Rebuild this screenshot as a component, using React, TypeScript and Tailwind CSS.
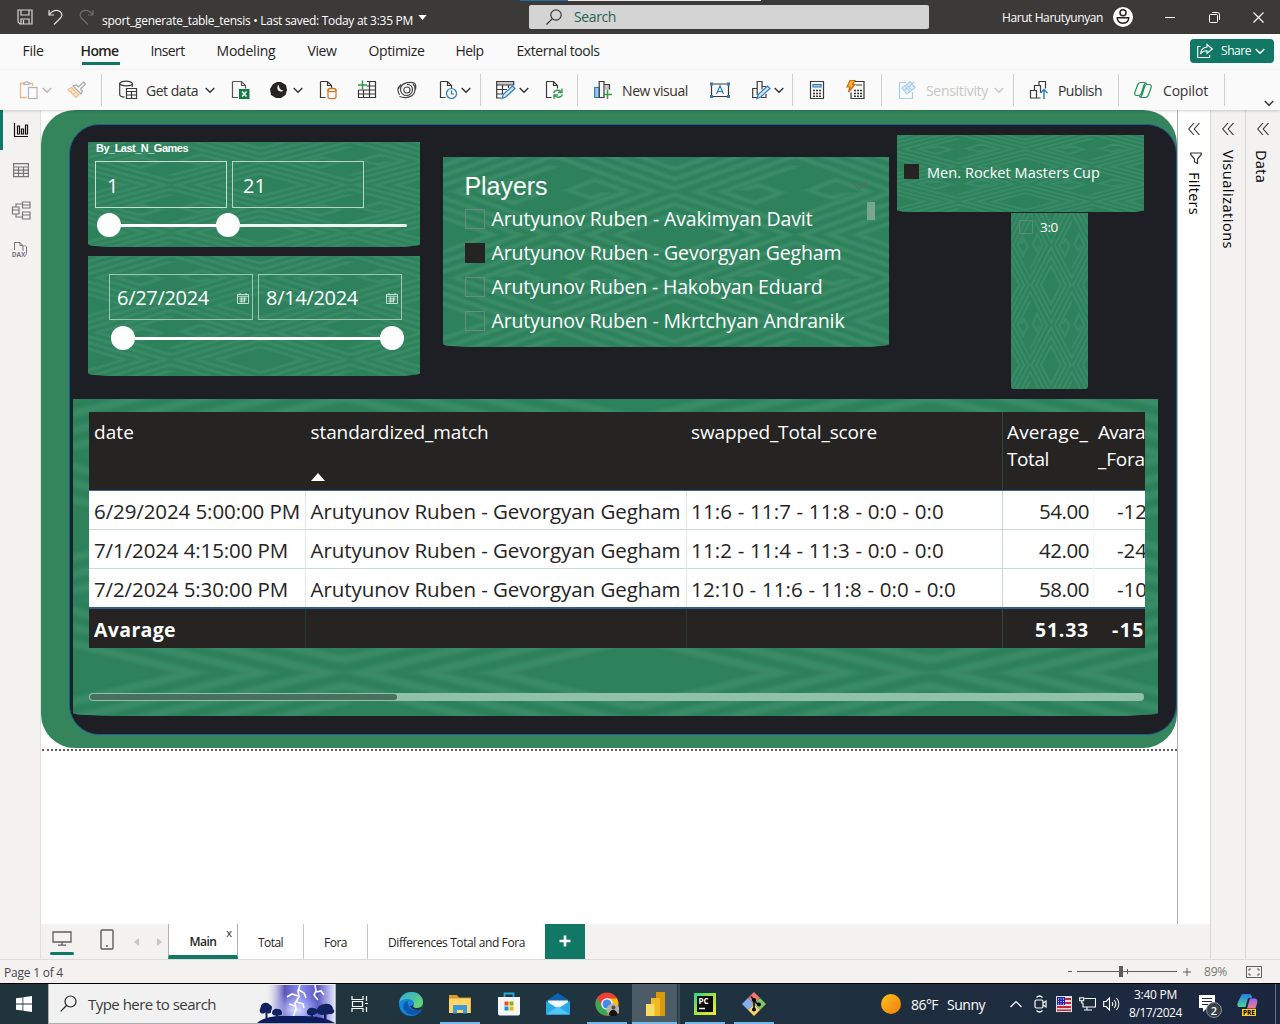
import React, { useId, useLayoutEffect, useRef } from "react";

/* Text run spread over a known width by adjusting its tracking. */
function Fit({ w, children, className = "", vertical = false }: { w: number; children: string; className?: string; vertical?: boolean }) {
  const ref = useRef<HTMLSpanElement>(null);
  useLayoutEffect(() => {
    const el = ref.current;
    if (!el) return;
    el.style.letterSpacing = "0px";
    const box = el.getBoundingClientRect();
    const natural = vertical ? box.height : box.width;
    el.style.letterSpacing = (w - natural) / children.length + "px";
  }, [w, children, vertical]);
  return (
    <span ref={ref} className={"inline-block shrink-0 whitespace-pre " + className}>
      {children}
    </span>
  );
}

type IconProps = { className?: string; children: React.ReactNode; box?: string };
function Ico({ className = "size-5", children, box = "0 0 20 20" }: IconProps) {
  return (
    <svg viewBox={box} fill="none" stroke="#3b3a39" strokeWidth="1.2" className={"shrink-0 " + className}>
      {children}
    </svg>
  );
}

function Chev({ className = "" }: { className?: string }) {
  return (
    <svg viewBox="0 0 10 10" fill="none" stroke="currentColor" strokeWidth="1.4" className={"size-2.5 shrink-0 " + className}>
      <path d="M.7 3 5 7.3 9.3 3" />
    </svg>
  );
}

function Sep({ className }: { className: string }) {
  return <div className={"h-8 w-px shrink-0 bg-[#d2d0ce] " + className} />;
}

function TitleBar() {
  return (
    <header className="relative flex h-[34px] items-center bg-[#3b3a39] text-white">
      <div className="absolute left-[520px] top-0 flex h-px w-[241px] bg-[#e8e8e8]">
        <div className="h-px w-12 bg-[#1d6fa5]" />
      </div>
      <Ico className="ml-[17px] size-4 text-white" box="0 0 16 16">
        <path d="M1 1h14v14H3l-2-2zM4 1v5h8V1M4 15v-5h8v5M6.5 11v4" stroke="#d6d6d6" />
      </Ico>
      <Ico className="ml-[15px] size-4" box="0 0 16 16">
        <path d="M1 1v5h5M1.3 5.7C4 2 7 1 10 1.6c4 1 5 5 2.5 7.400L6 15.500" stroke="#e0e0e0" />
      </Ico>
      <Ico className="ml-[14px] size-4" box="0 0 16 16">
        <path d="M15 1v5h-5M14.700 5.700C12 2 9 1 6 1.600c-4 1-5 5-2.500 7.400L10 15.500" stroke="#6f6e6d" />
      </Ico>
      <Fit w={311} className="ml-[8px] mt-[8px] text-[12px] leading-4">sport_generate_table_tensis • Last saved: Today at 3:35 PM</Fit>
      <svg viewBox="0 0 10 6" className="ml-[5px] h-[5px] w-[9px]"><path d="M0 0h10L5 6z" fill="#fff" /></svg>
      <div className="absolute left-[529px] top-[5px] flex h-6 w-[400px] items-center rounded-[2px] bg-[#d4d4d4]">
        <Ico className="ml-[17px] size-4" box="0 0 16 16">
          <circle cx="10" cy="6" r="5.200" /><path d="M6.300 9.700.5 15.500" />
        </Ico>
        <Fit w={42} className="ml-[12px] text-[14px] leading-5 text-[#2b5e50]">Search</Fit>
      </div>
      <div className="ml-auto flex items-center">
        <Fit w={101} className="mt-px text-[12px]">Harut Harutyunyan</Fit>
        <svg viewBox="0 0 20 20" className="ml-[10px] size-5">
          <circle cx="10" cy="10" r="10" fill="#fff" />
          <circle cx="10" cy="5.700" r="3" fill="none" stroke="#222" strokeWidth="1.500" />
          <path d="M4.300 10.800h11.400c0 3.500-2.500 5.400-5.700 5.400s-5.700-1.900-5.700-5.400z" fill="none" stroke="#222" strokeWidth="1.500" />
        </svg>
        <div className="ml-[32px] h-px w-[10px] bg-white" />
        <svg viewBox="0 0 11 11" className="ml-[34px] size-[11px]" fill="none" stroke="#fff">
          <rect x=".5" y="2.500" width="8" height="8" rx="1" /><path d="M3 .5h5.500a2 2 0 0 1 2 2V8" />
        </svg>
        <svg viewBox="0 0 11 11" className="ml-[33px] mr-[16px] size-[11px]" fill="none" stroke="#fff" strokeWidth="1.200"><path d="m.5.5 10 10m0-10-10 10" /></svg>
      </div>
    </header>
  );
}

function Menu() {
  const t = "text-[14px] leading-5";
  return (
    <nav className="flex h-9 items-center bg-[#fafafa] pb-[3px] text-[#252423]">
      <Fit w={21} className={"ml-[22.500px] " + t}>File</Fit>
      <div className="relative ml-[37px] flex">
        <Fit w={38} className={"font-semibold " + t}>Home</Fit>
        <div className="absolute -bottom-[4px] left-[1px] h-[3px] w-[38px] bg-[#117865]" />
      </div>
      <Fit w={34} className={"ml-[32px] " + t}>Insert</Fit>
      <Fit w={59} className={"ml-[32px] " + t}>Modeling</Fit>
      <Fit w={29} className={"ml-[32px] " + t}>View</Fit>
      <Fit w={56} className={"ml-[32px] " + t}>Optimize</Fit>
      <Fit w={28} className={"ml-[31px] " + t}>Help</Fit>
      <Fit w={83} className={"ml-[33px] " + t}>External tools</Fit>
      <button className="ml-auto mr-[6px] flex h-6 w-[84px] items-center rounded-[4px] bg-[#117865] text-white">
        <svg viewBox="0 0 16 16" className="ml-[7px] size-4" fill="none" stroke="#fff" strokeWidth="1.100">
          <path d="M3.500 3.500H.7v11h12V12" /><path d="M10 1.500 15.300 6 10 10.300V7.800C6.500 7.800 4.800 9 3.500 11c.3-4 2.800-6.500 6.500-7z" />
        </svg>
        <Fit w={30} className="ml-[8px] text-[12px]">Share</Fit>
        <Chev className="ml-[4px]" />
      </button>
    </nav>
  );
}

const doc = "M3.500 1.500h7l4 4v3M10.500 1.500v4h4M3.500 1.500v16h5";

function Toolbar() {
  const t = "text-[14px] leading-5 mt-px";
  return (
    <div className="relative z-10 flex h-10 items-center bg-[#fafafa] text-[#333] shadow-[0_1px_3px_rgba(0,0,0,0.18)]">
      <Ico className="ml-[19px] size-5">
        <path d="M8 17.500H1.500v-14h4M9.500 3.500h4V6" stroke="#efb984" strokeWidth="1.400" /><path d="M5 4.500v-2h1.500q1-2 2 0H10v2z" stroke="#b5b3b1" /><rect x="9.500" y="7.500" width="8.500" height="11" stroke="#b5b3b1" />
      </Ico>
      <Chev className="ml-[3px] text-[#b8b6b4]" />
      <Ico className="ml-[15px] size-5">
        <path d="m1 9.500 8 8 3-2.500-7.500-7.500zM3.500 11.500l2-1M6 14l2-1" fill="#fce5cc" stroke="#edbf8f" />
        <path d="m6 6 8 8 1.500-3-2-2 5-5-2-2-5 5-2-2z" stroke="#aaa8a6" />
      </Ico>
      <Sep className="ml-[14px]" />
      <Ico className="ml-[16px] size-5">
        <ellipse cx="8" cy="3.500" rx="6.300" ry="2.300" /><path d="M1.700 3.500v11c0 1.600 2.500 2.500 5 2.500M14.300 3.500V7M8.500 8.500h10v10h-10zM8.500 11.500h10M8.500 15h10M13.500 11.500v7" />
      </Ico>
      <Fit w={52} className={"ml-[8px] " + t}>Get data</Fit>
      <Chev className="ml-[7px]" />
      <Ico className="ml-[16px] size-5">
        <path d="M1.500 1.500h9l4 4v3M10.500 1.500v4h4M1.500 1.500v16H7" stroke="#555" /><path d="M8 9h10.500v10H8z" fill="#107c41" stroke="none" /><path d="m11 11.500 4.500 5m0-5-4.500 5" stroke="#fff" strokeWidth="1.500" />
      </Ico>
      <Ico className="ml-[18px] size-5">
        <path d="M8 2h4l5 3 1 5-1.500 5-4.500 3H7L2 15 1 9l3-5z" fill="#252423" stroke="none" /><path d="M9.500 4.500C7.500 7 8 11.500 12 11.500c1.200 0 2-.5 2.500-1-2.500.3-4.500-2-5-6z" fill="#fafafa" stroke="none" />
      </Ico>
      <Chev className="ml-[4px]" />
      <Ico className="ml-[15px] size-5">
        <path d={doc} transform="translate(-1)" /><g stroke="#d9731a"><ellipse cx="14" cy="10" rx="4" ry="1.700" fill="#fafafa" /><path d="M10 10v7c0 1 1.500 1.700 4 1.700s4-.7 4-1.700v-7" fill="#fafafa" /><ellipse cx="14" cy="10" rx="4" ry="1.700" /></g>
      </Ico>
      <Ico className="ml-[19px] size-5">
        <path d="M10 1.500h8.500v16h-17V10M10 6h8.500M1.500 10h17M1.500 14h17M6.500 10v7.500M12.500 1.500v16" /><path d="M5.500.500v9M1 5h9" stroke="#2c9a48" strokeWidth="1.500" />
      </Ico>
      <Ico className="ml-[20px] size-5">
        <path d="M18 3.500C14 1.500 3.500 2 3.500 9.500c0 3.500 3 6 6 6s6-2.500 6-6-2.500-5-5.500-5M1.500 7c-1.500 3.500.5 7 1 8M2.500 16.500C8 18.500 18 18 18 9c0-2-.5-3.500-2-5M10 7c2 0 3 1.200 3 3s-1.500 3-3 3-3.200-1-3.200-3S8.500 7 10 7zM18 3.500c1 2 .8 5-.2 7M4 4.500C2.500 6 1.500 7 1.500 9" stroke="#444" />
      </Ico>
      <Ico className="ml-[21px] size-5">
        <path d={doc} transform="translate(-1)" /><circle cx="13.500" cy="13.500" r="5" stroke="#2b7bb9" fill="#fafafa" /><path d="M13.500 10.500v3.500H16" stroke="#2b7bb9" />
      </Ico>
      <Chev className="ml-[3px]" />
      <Sep className="ml-[9px]" />
      <Ico className="ml-[15px] size-5">
        <path d="M.7 1.500h17V5H.7z" fill="#c8c6c4" /><path d="M.7 5v13H5M.7 9.500H11M.7 14H7M6.500 5v9M12.500 5v3" /><path d="m6 18.500 1.200-4L16.500 6 19 8.500 9.700 17z" fill="#cfe6f8" stroke="#2b7bb9" />
      </Ico>
      <Chev className="ml-[3px]" />
      <Ico className="ml-[15px] size-5">
        <path d={doc} transform="translate(-1)" /><path d="M9.500 13c1-3 5.500-4 8-1M18 8.500V12.500h-4M18.500 14.500c-1 3-5.500 4-8 1M10 19v-4h4" stroke="#3a9a4c" strokeWidth="1.400" />
      </Ico>
      <Sep className="ml-[13px]" />
      <Ico className="ml-[15px] size-5">
        <path d="M1.700 7.500h4.500v10H1.700z" fill="#9ccbf0" stroke="#2b7bb9" /><path d="M12 5h4v5h-4z" fill="#c8c6c4" stroke="none" /><path d="M6.200 17.500v-16H11v16zM11 4.500h5.500v5" /><path d="M14.500 10v9M10 14.500h9" stroke="#3a9a4c" strokeWidth="1.500" />
      </Ico>
      <Fit w={66} className={"ml-[9px] " + t}>New visual</Fit>
      <Ico className="ml-[22px] size-5">
        <path d="M1.500 4h17v12.500h-17z" /><path d="M0 2.500h3v3H0zM17 2.500h3v3h-3zM0 15h3v3H0zM17 15h3v3h-3z" fill="#2b7bb9" stroke="none" /><path d="M6.500 14 10 5.800 13.500 14M7.700 11.500h4.600" stroke="#2b7bb9" />
      </Ico>
      <Ico className="ml-[21px] size-5">
        <path d="M6.500 17.500H1.700V8.500h4.500M6.200 15v-13.500H11v8M11 6.500h4M15 14v3.500h-5" /><path d="m6 18.500 1.200-4L16.500 6 19 8.500 9.700 17z" fill="#cfe6f8" stroke="#2b7bb9" />
      </Ico>
      <Chev className="ml-[3px]" />
      <Sep className="ml-[8px]" />
      <Ico className="ml-[14px] size-5">
        <path d="M3.500 1.500h13v17h-13z" /><path d="M6 4.500h8v2.500H6z" fill="#9ccbf0" stroke="#2b7bb9" /><path d="M6 10.500h2m1 0h2m1 0h2M6 13.500h2m1 0h2m1 0h2M6 16.200h2m1 0h2m1 0h2" strokeWidth="1.600" />
      </Ico>
      <Ico className="ml-[19px] size-5">
        <path d="M8 1.500h10v17H5v-6M10 5h6" /><path d="M8 10.500h2m1 0h2m1 0h2M8 13.500h2m1 0h2m1 0h2M8 16.200h2m1 0h2m1 0h2" strokeWidth="1.600" /><path d="M4 .5h5L6.500 4.500H9L2.500 12l1.500-5H1z" fill="#fbb040" stroke="#c96a10" />
      </Ico>
      <Sep className="ml-[15px]" />
      <Ico className="ml-[15px] size-5">
        <g stroke="#a9cfe8"><path d="M9 2.500H2.500v16h13V12" /><path d="m5 8 5 6 3-2.500-5-6zM9.500 4.500l5 6 3.500-3-5-6zM12 7l5-5M7.500 10 10 8" fill="#e0eff8" /></g>
      </Ico>
      <Fit w={62} className={"ml-[9px] text-[#c8c6c4] " + t}>Sensitivity</Fit>
      <Chev className="ml-[6px] text-[#c8c6c4]" />
      <Sep className="ml-[9px]" />
      <Ico className="ml-[15px] size-5">
        <path d="M1.500 10.500h6v7.500h-6zM5.500 10.500v-5h6v7M10 5.500v-4h6.500v7M7.500 18h4" /><path d="M15 19v-9M11.500 13 15 9.500l3.500 3.500" stroke="#2b7bb9" strokeWidth="1.400" />
      </Ico>
      <Fit w={44} className={"ml-[9px] " + t}>Publish</Fit>
      <Sep className="ml-[16px]" />
      <Ico className="ml-[14px] size-5">
        <g stroke="#1f9254" strokeWidth="1.200"><path d="M7.500 2.500h4c1.300 0 1.800.8 2.200 2.200M7.500 2.500C5.500 2.500 4.800 4 4.300 5.800L2 12c-.8 2.200-.2 3.500 2 3.500h2M6 15.500c1.500 0 2-.8 2.500-2.500L11 5c.5-1.500 1.200-2 2.500-2M12.500 17.500h-4c-1.300 0-1.800-.8-2.200-2.200M12.500 17.500c2 0 2.700-1.500 3.200-3.300L18 8c.8-2.200.2-3.500-2-3.500h-2M14 4.500c-1.500 0-2 .8-2.500 2.500L9 15c-.5 1.500-1 2.500-2.500 2.500" /></g>
      </Ico>
      <Fit w={45} className={"ml-[10px] " + t}>Copilot</Fit>
      <Sep className="ml-[16px]" />
      <Chev className="ml-auto mr-[6px] mt-[26px]" />
    </div>
  );
}

function Rail() {
  return (
    <aside className="flex w-[41px] shrink-0 flex-col items-center border-r border-[#e1dfdd] bg-[#f3f2f1]">
      <div className="flex h-10 w-full items-center border-l-[3px] border-[#117865]">
        <Ico className="ml-[10px] size-4" box="0 0 16 16"><path d="M1.500 1v13.500H15M4.500 12V4h2v8zM8.500 12V7h2v5zM12.500 12V3h2v9z" stroke="#111" /></Ico>
      </div>
      <Ico className="ml-[2px] mt-[12px] size-4" box="0 0 16 16"><path d="M.6 1.600h14.800v13H.6zM.6 5h14.800M.6 8.200h14.800M.6 11.400h14.800M5.500 5v9.600M10.500 5v9.600" stroke="#77757a" /></Ico>
      <Ico className="ml-[2px] mt-[22px] size-5"><path d="M1.500 7h6.500v7H1.500zM1.500 10H8M11.500 2h7.500v6h-7.500zM11.500 5H19M11.500 12h7.500v7h-7.500zM11.500 15H19M5 7V4h6.500M5 14v3h6.500" stroke="#77757a" /></Ico>
      <div className="mt-[20px] flex h-5 flex-col items-center">
        <svg viewBox="0 0 20 20" className="size-5" fill="none" stroke="#77757a"><path d="M4.500 10V2.500h5.500l3 3V11M10 2.500v3h3M14.500 5l2 2v6.500l-1 2" /></svg>
        <span className="-mt-[9px] mr-[3px] text-[6.500px] font-bold leading-[8px] text-[#77757a]">DAX</span>
      </div>
    </aside>
  );
}

/* Woven lozenge texture stretched over a panel. */
function Weave() {
  const id = useId();
  const scroll = (x: number, y: number) => (
    <g key={`${x}-${y}`}>
      <path d={`M${x - 17} ${y} ${x} ${y - 33} ${x + 17} ${y} ${x} ${y + 33}z`} />
      <path d={`M${x} ${y - 24} ${x - 12.5} ${y} ${x - 7} ${y + 11} ${x - 2.5} ${y + 1}l-4-7-2.500 5`} />
      <path d={`M${x} ${y + 24} ${x + 12.5} ${y} ${x + 7} ${y - 11} ${x + 2.5} ${y - 1}l4 7 2.500-5`} />
    </g>
  );
  return (
    <svg viewBox="0 0 77 176" preserveAspectRatio="none" className="absolute inset-0 size-full">
      <defs>
        <pattern id={id} width="41.600" height="80" x="19.200" y="32" patternUnits="userSpaceOnUse">
          <g fill="none" stroke="#3a8c67" strokeWidth="1.900">
            {[19.5, 14.800, 10].map((r) => (
              <path key={r} d={`M${20.8 - r} 40 20.800 ${40 - r * 1.92} ${20.8 + r} 40 20.800 ${40 + r * 1.92}z`} />
            ))}
            {[[0, 0], [41.6, 0], [0, 80], [41.6, 80]].map(([x, y]) => scroll(x, y))}
          </g>
        </pattern>
        <filter id={id + "s"} x="0" y="0" width="1" height="1"><feGaussianBlur stdDeviation=".45" /></filter>
      </defs>
      <rect width="77" height="176" fill="#2d815b" />
      <rect x="-5" y="-5" width="87" height="186" fill={`url(#${id})`} filter={`url(#${id}s)`} />
    </svg>
  );
}

function Panel({ className, children }: { className: string; children: React.ReactNode }) {
  return (
    <section className={"relative isolate shrink-0 overflow-hidden text-white " + className}>
      <div className="absolute inset-0 -z-10"><Weave /></div>
      {children}
    </section>
  );
}

function Cal() {
  return (
    <svg viewBox="0 0 12 11" className="h-[11px] w-3 shrink-0" fill="none" stroke="#d5e8df" strokeWidth=".9"><path d="M.5 1.500h11v9H.5zM.5 3.300h11M2.500 5.200h7M2.500 7h7M2.500 8.700h5M4.500 4.500v5M7.500 4.500v5M3 0v2M9 0v2" /></svg>
  );
}

function Knob() {
  return <div className="z-10 size-6 shrink-0 rounded-full bg-white" />;
}

const players = [
  { name: "Arutyunov Ruben - Avakimyan Davit", w: 321, on: false },
  { name: "Arutyunov Ruben - Gevorgyan Gegham", w: 350, on: true },
  { name: "Arutyunov Ruben - Hakobyan Eduard", w: 331, on: false },
  { name: "Arutyunov Ruben - Mkrtchyan Andranik", w: 353, on: false },
];

const rows = [
  { d: "6/29/2024 5:00:00 PM", dw: 206, s: "11:6 - 11:7 - 11:8 - 0:0 - 0:0", sw: 253, a: "54.00", f: "-12" },
  { d: "7/1/2024 4:15:00 PM", dw: 194, s: "11:2 - 11:4 - 11:3 - 0:0 - 0:0", sw: 253, a: "42.00", f: "-24" },
  { d: "7/2/2024 5:30:00 PM", dw: 194, s: "12:10 - 11:6 - 11:8 - 0:0 - 0:0", sw: 265, a: "58.00", f: "-10" },
];

function DataTable() {
  const h = "text-[19px] leading-[27px]";
  const cols = "grid grid-cols-[217px_381px_316px_91px_60px] w-[1065px]";
  return (
    <div className="mx-4 mt-[13px] w-[1056px] overflow-hidden">
      <div className={cols + " h-[79px] border-b border-[#3a6a94] bg-[#252423] pt-[7px]"}>
        <div className="pl-[5px]"><Fit w={40} className={h}>date</Fit></div>
        <div className="pl-[4.500px]">
          <Fit w={178} className={h}>standardized_match</Fit>
          <svg viewBox="0 0 14 8" className="mt-[27px] h-2 w-[14px]"><path d="M0 8h14L7 0z" fill="#fff" /></svg>
        </div>
        <div className="pl-[4px]"><Fit w={186} className={h}>swapped_Total_score</Fit></div>
        <div className="-ml-px -mt-[7px] flex flex-col items-start border-l border-[#31463c] pl-[4px] pt-[7px]"><Fit w={81} className={h}>Average_</Fit><Fit w={42} className={h}>Total</Fit></div>
        <div className="flex flex-col items-start pl-[4px]"><Fit w={47} className={h}>Avara</Fit><Fit w={47} className={h}>_Fora</Fit></div>
      </div>
      {rows.map((r) => (
        <div key={r.d} className={cols + " h-[39px] border-b border-[#cadad5] bg-white text-[20.500px] leading-[41px] text-[#252423]"}>
          <div className="border-r border-[#dfe9e6] pl-[5px]"><Fit w={r.dw}>{r.d}</Fit></div>
          <div className="border-r border-[#dfe9e6] pl-[4.500px]"><Fit w={370}>Arutyunov Ruben - Gevorgyan Gegham</Fit></div>
          <div className="border-r border-[#c4d8d1] pl-[4px]"><Fit w={r.sw}>{r.s}</Fit></div>
          <div className="border-r border-[#f3f6f5] pr-[4px] text-right"><Fit w={50}>{r.a}</Fit></div>
          <div className="pl-[23px]"><Fit w={30}>{r.f}</Fit></div>
        </div>
      ))}
      <div className={cols + " relative -mt-px h-[41px] border-t-2 border-[#2e5f8a] bg-[#252423] text-[19.500px] font-bold leading-[41px]"}>
        <div className="border-r border-[#293631] pl-[5px]"><Fit w={82}>Avarage</Fit></div>
        <div className="border-r border-[#293631]" />
        <div className="border-r border-[#31463c]" />
        <div className="pr-[5px] text-right"><Fit w={54}>51.33</Fit></div>
        <div className="pl-[18px]"><Fit w={33}>-15</Fit></div>
      </div>
    </div>
  );
}

function Report() {
  return (
    <div className="h-[638px] w-full rounded-[34px] bg-[#34855c] pl-7 pt-[14px]">
      <div className="h-[611px] w-[1108px] rounded-[30px] border border-[#1c5c94] bg-[#1e1f24]">
        <div className="flex h-[274px] items-start pl-[18px]">
          <div className="mt-[17px] flex w-[332px] flex-col gap-[9px]">
            <Panel className="flex h-[105px] flex-col [border-radius:0_0_24px_24px/0_0_3px_3px]">
              <div className="flex h-[13px] pl-[8px]"><Fit w={92} className="font-['Liberation_Sans'] text-[11px] font-bold leading-[13px]">By_Last_N_Games</Fit></div>
              <div className="ml-[7px] mt-[6px] flex gap-[5px] text-[20px]">
                <div className="flex h-[47px] w-[132px] items-center border border-[#c5e0d3] pl-[11px] pt-[2px]">1</div>
                <div className="flex h-[47px] w-[132px] items-center border border-[#b5d6c6] pl-[10px] pt-[2px]"><Fit w={23}>21</Fit></div>
              </div>
              <div className="ml-[9px] mt-[5px] flex items-center">
                <Knob /><div className="h-[3px] w-[95px] bg-white" /><Knob /><div className="h-[3px] w-[167px] rounded-r bg-[#edf5f1]" />
              </div>
            </Panel>
            <Panel className="h-[120px] [border-radius:0_0_24px_24px/0_0_3px_3px]">
              <div className="ml-[21px] mt-[18px] flex gap-[5px] text-[20px]">
                <div className="flex h-[46px] w-[144px] items-center justify-between border border-[#9cc7b3] pl-[7px] pr-[3px] pt-[2px]"><Fit w={92}>6/27/2024</Fit><Cal /></div>
                <div className="flex h-[46px] w-[144px] items-center justify-between border border-[#9cc7b3] pl-[7px] pr-[3px] pt-[2px]"><Fit w={92}>8/14/2024</Fit><Cal /></div>
              </div>
              <div className="ml-[23px] mt-[6px] flex items-center"><Knob /><div className="h-[3px] w-[245px] bg-white" /><Knob /></div>
            </Panel>
          </div>
          <Panel className="ml-[23px] mt-[32px] h-[190px] w-[446px] px-[21.500px] [border-radius:0_0_30px_30px/0_0_3px_3px]">
            <div className="mt-[14px] flex h-[31px] items-center justify-between">
              <Fit w={83} className="font-['Liberation_Sans'] text-[25px] leading-[29px]">Players</Fit>
              <svg viewBox="0 0 18 10" className="mb-1 h-[10px] w-[18px] shrink-0" fill="none" stroke="#56705f" strokeWidth="1.300"><path d="m1 1 8 8 8-8" /></svg>
            </div>
            {players.map((p) => (
              <div key={p.name} className="flex h-[34px] items-center gap-[7px]">
                {p.on ? <div className="size-5 shrink-0 bg-[#252423]" /> : <div className="size-5 shrink-0 border border-[#6c8a7b]" />}
                <Fit w={p.w} className="text-[19.500px] leading-[34px]">{p.name}</Fit>
              </div>
            ))}
            <div className="absolute right-[14px] top-[45px] h-[18px] w-2 bg-[#7aa690]" />
          </Panel>
          <div className="ml-[8px] mt-[10px] w-[247px]">
            <Panel className="flex h-[77px] items-center gap-2 pl-[7px] [border-radius:0_0_18px_18px/0_0_2px_2px]">
              <div className="mb-1 size-[15px] bg-[#252423]" />
              <Fit w={173} className="mb-[2px] text-[14.500px]">Men. Rocket Masters Cup</Fit>
            </Panel>
            <Panel className="ml-[114px] mt-px h-[176px] w-[77px] rounded-b-[3px] pl-2 pt-[6px]">
              <div className="flex items-center gap-[7px]">
                <div className="size-[14px] border border-[#5f8a74]" />
                <Fit w={18} className="text-[13.500px] leading-4">3:0</Fit>
              </div>
            </Panel>
          </div>
        </div>
        <Panel className="ml-[3px] flex h-[317px] w-[1085px] flex-col [border-radius:0_0_50px_50px/0_0_3px_3px]">
          <DataTable />
          <div className="ml-4 mt-[45px] h-2 w-[1055px] rounded-full bg-[#92c1a9] p-px">
            <div className="h-1.5 w-[307px] rounded-full bg-[#48705d]" />
          </div>
        </Panel>
      </div>
    </div>
  );
}

function PageTabs() {
  const t = "text-[12px] leading-4";
  return (
    <div className="flex h-[35px] items-stretch bg-[#f3f2f1] text-[#252423]">
      <div className="ml-[10px] flex w-[22px] flex-col items-center justify-between pb-[4px] pt-[7px]">
        <svg viewBox="0 0 20 15" className="h-[15px] w-5" fill="none" stroke="#605e5c" strokeWidth="1.300"><path d="M1 1h18v10H1zM10 11v3M6 14.200h8" /></svg>
        <div className="h-[3px] w-6 rounded bg-[#117865]" />
      </div>
      <svg viewBox="0 0 14 21" className="ml-[27px] mt-[5px] h-[21px] w-[14px]" fill="none" stroke="#605e5c" strokeWidth="1.400"><rect x="1" y="1" width="12" height="19" rx="1" /><path d="M6 17h2" /></svg>
      <svg viewBox="0 0 28 8" className="ml-[20px] mt-[14px] h-2 w-7" fill="#c8c6c4"><path d="M5 0v8L0 4zM23 0v8l5-4z" /></svg>
      <div className="relative ml-[6px] flex w-[70px] items-center justify-center border-x border-[#b3b0ad] border-b-4 border-b-[#117865] bg-white pt-[5px]">
        <Fit w={27} className={"font-semibold " + t}>Main</Fit>
        <span className="absolute right-[5px] top-[1px] text-[11px] leading-4">x</span>
      </div>
      <div className="flex w-[66px] items-center justify-center border-r border-[#c8c6c4] bg-white pt-[2px]"><Fit w={25} className={t}>Total</Fit></div>
      <div className="flex w-[64px] items-center justify-center border-r border-[#c8c6c4] bg-white pt-[2px]"><Fit w={23} className={t}>Fora</Fit></div>
      <div className="flex w-[177px] items-center justify-center bg-white pt-[2px]"><Fit w={137} className={t}>Differences Total and Fora</Fit></div>
      <button className="flex w-10 items-center justify-center bg-[#117865]"><svg viewBox="0 0 12 12" className="mb-[2px] size-3"><path d="M6 .5v11M.5 6h11" stroke="#fff" strokeWidth="2.600" /></svg></button>
    </div>
  );
}

function Collapse() {
  return <svg viewBox="0 0 12 12" className="size-3 shrink-0" fill="none" stroke="#333" strokeWidth="1.100"><path d="M6 0 .7 6 6 12M11.500 0 6.200 6l5.300 6" /></svg>;
}

function Workspace() {
  return (
    <div className="flex h-[849px]">
      <Rail />
      <div className="flex w-[1169px] flex-col">
        <div className="flex h-[814px] bg-white">
          <main className="w-[1137px] border-r border-[#b3b0ad]">
            <Report />
            <div className="ml-px mt-px h-0 border-t-2 border-dotted border-[#605e5c]" />
          </main>
          <div className="flex w-8 flex-col items-center pt-[13px]">
            <Collapse />
            <svg viewBox="0 0 12 12" className="ml-1 mt-[17px] size-3" fill="none" stroke="#333" strokeWidth="1.200"><path d="M.7 1h10.600v1.500L7.500 7v4.500l-3-1.500V7L.7 2.500z" /></svg>
            <Fit w={43} vertical className="mt-[8px] text-[14.500px] font-medium leading-4 [writing-mode:vertical-rl]">Filters</Fit>
          </div>
        </div>
        <PageTabs />
      </div>
      <div className="flex w-[35px] flex-col items-center border-l border-[#d8d6d4] bg-[#f3f2f1] pt-[13px]">
        <Collapse />
        <Fit w={99} vertical className="mr-px mt-[15px] text-[14.500px] font-medium leading-4 [writing-mode:vertical-rl]">Visualizations</Fit>
      </div>
      <div className="flex w-[35px] flex-col items-center border-l border-[#d8d6d4] bg-[#f3f2f1] pt-[13px]">
        <Collapse />
        <Fit w={33} vertical className="mr-[5px] mt-[15px] text-[14.500px] font-medium leading-4 [writing-mode:vertical-rl]">Data</Fit>
      </div>
    </div>
  );
}

function StatusBar() {
  return (
    <footer className="flex h-[25px] items-center border-b border-t border-b-black border-t-[#dddbd9] bg-[#f3f2f1] text-[#484644]">
      <Fit w={59} className="ml-[4px] mt-[2px] text-[12px]">Page 1 of 4</Fit>
      <div className="ml-auto h-[1.500px] w-[4px] bg-[#605e5c]" />
      <div className="ml-[5px] flex w-[100px] items-center">
        <div className="h-px w-[42px] bg-[#605e5c]" /><div className="h-[11px] w-[4px] bg-[#605e5c]" /><div className="h-px w-[4px] bg-[#605e5c]" /><div className="h-[5px] w-px bg-[#605e5c]" /><div className="h-px w-[49px] bg-[#605e5c]" />
      </div>
      <svg viewBox="0 0 8 8" className="ml-[6px] size-2"><path d="M4 0v8M0 4h8" stroke="#605e5c" /></svg>
      <Fit w={23} className="ml-[13px] text-[12px] text-[#797775]">89%</Fit>
      <svg viewBox="0 0 16 12" className="ml-[19px] mr-[18px] h-3 w-4" fill="none" stroke="#605e5c"><path d="M.5.5h15v11H.5zM3 5V3h2M11 3h2v2M13 7v2h-2M5 9H3V7" /></svg>
    </footer>
  );
}

function Storm() {
  const id = useId();
  return (
    <svg viewBox="0 0 78 38" className="ml-auto h-[38px] w-[78px]">
      <defs>
        <linearGradient id={id}><stop offset="0" stopColor="#eef0ff" stopOpacity="0" /><stop offset=".28" stopColor="#5b55b8" /><stop offset=".5" stopColor="#8a8df2" /><stop offset=".75" stopColor="#5a57c4" /><stop offset="1" stopColor="#e5e7ff" /></linearGradient>
        <radialGradient id={id + "r"}><stop stopColor="#dfe3ff" /><stop offset="1" stopColor="#9aa0f6" stopOpacity="0" /></radialGradient>
      </defs>
      <path d="M8 0h70v38H18z" fill={`url(#${id})`} />
      <ellipse cx="39" cy="25" rx="26" ry="18" fill={`url(#${id}r)`} />
      <path d="M43 0l-2 6 1 6-4 6 1 6-3 8M42 5l5 3 2 5M41 11l-6-2-5 3M40 17l6 2 1 4M38 21l-6-2M58 0l1 6-2 4 4 5M59 7l5-1 3 4" fill="none" stroke="#fff" strokeWidth="1.600" />
      <path d="M0 38c10-8 22-7 38-7s28 0 40 7z" fill="#0b1c5e" />
      <g fill="#10235f"><path d="M8.500 22h2v14h-2zM19 26h2v8h-2zM54 27h2v6h-2zM67 25h2.500v9H67z" /><path d="M3 27c-1-3 1-4 1-6 0-3 7-5 9-1 3 1 2 4 1 6 1 3-4 3-5 1-2 2-5 2-6 0zM15 28c0-3 3-5 6-4 4 0 5 5 3 6-3 1-9 1-9-2zM50 28c-1-3 3-6 6-5 4 0 6 4 3 6s-9 2-9-1zM60 27c-1-4 3-8 8-8 6-1 8 3 8 5 3 2 0 6-3 5-5 1-12 2-13-2z" /></g>
    </svg>
  );
}

function TaskIcon({ x, under, children }: { x: string; under?: string; children: React.ReactNode }) {
  return (
    <div className={"relative flex h-10 shrink-0 items-center justify-center " + x}>
      <svg viewBox="0 0 24 24" className="size-6">{children}</svg>
      {under && <div className={"absolute bottom-0 h-0.5 bg-[#76b9ed] " + under} />}
    </div>
  );
}

function Taskbar() {
  const id = useId();
  const g = (n: string) => `${id}${n}`;
  return (
    <div className="flex h-10 items-center bg-linear-to-r from-[#20353b] via-[#203440] to-[#1b263e] text-white">
      <svg viewBox="0 0 16 16" className="ml-4 size-4" fill="#fff"><path d="M0 2.300 6.500 1.400v6.200H0zM7.300 1.300 16 0v7.600H7.300zM0 8.400h6.500v6.200L0 13.700zM7.300 8.400H16V16l-8.700-1.200z" /></svg>
      <div className="ml-4 flex h-10 w-[288px] items-center border border-t-0 border-[#a9afb3] bg-[#f1f1f1]">
        <Ico className="ml-[11px] size-[17px]" box="0 0 17 17"><circle cx="10.500" cy="6.500" r="5.500" stroke="#222" /><path d="M6.500 10.500.7 16.300" stroke="#222" /></Ico>
        <Fit w={128} className="ml-[11px] mt-px text-[15px] text-[#3c3c3c]">Type here to search</Fit>
        <Storm />
      </div>
      <TaskIcon x="w-12"><path d="M4 4v3.500h11V4M4 20v-3.500h11V20M4.500 9.500h10v5h-10zM18.500 4v5M18.500 15v5M17 11.500h3" fill="none" stroke="#fff" strokeWidth="1.200" /></TaskIcon>
      <TaskIcon x="ml-[2px] w-[50px]">
        <defs>
          <linearGradient id={g("e2")} x1="0" y1="0" x2="1" y2="1"><stop stopColor="#2aa9e0" /><stop offset="1" stopColor="#6fdc5c" /></linearGradient>
        </defs>
        <circle cx="12" cy="12" r="12" fill="#1583d6" />
        <path d="M0 11C1 4 6 0 12 0c8 0 12 5 12 10 0 4-3 6-6 6-4 0-4-2-3-3 1-3-2-6-6-6-5 0-8 2-9 4z" fill={`url(#${g("e2")})`} />
        <path d="M9 9c-1 6 4 11 12 8 1 0 2 0 1 1.500-4 5-12 7-17-1C3 13 6 9.500 9 9z" fill="#0f56b0" />
        <path d="M14.500 13c-1 1-1 3 3.500 3 3 0 5-1 6-4l-.7 4.500C20 19 13 18.500 11 14z" fill="#203440" />
      </TaskIcon>
      <TaskIcon x="w-12" under="w-10"><path d="M1 3h8l2 2.500h12V21H1z" fill="#d79b28" /><path d="M1 6.500h21.500V21H1z" fill="#ffd567" /><path d="M5 13h14v8.500h-4V18H9v3.500H5z" fill="#3f9bd8" /></TaskIcon>
      <TaskIcon x="ml-[1px] w-12"><path d="M7.500 6V1.500h9V6" fill="none" stroke="#29a9e1" strokeWidth="1.800" /><path d="M1 5h22v16.500a2 2 0 0 1-2 2H3a2 2 0 0 1-2-2z" fill="#f5f5f5" /><path d="M7.500 9.500h4v4h-4z" fill="#e84e25" /><path d="M12.500 9.500h4v4h-4z" fill="#7fba00" /><path d="M7.500 14.500h4v4h-4z" fill="#1296db" /><path d="M12.500 14.500h4v4h-4z" fill="#f9b200" /></TaskIcon>
      <TaskIcon x="ml-[1px] w-12"><path d="M0 9 12 1l12 8v4H0z" fill="#0f63ae" /><path d="M2 8.500h20v8H2z" fill="#f5f8fb" /><path d="m0 9 12 7.500L24 9v13.500H0z" fill="#29a8ea" /><path d="m0 22.500 12-8 12 8z" fill="#50c4f5" /></TaskIcon>
      <TaskIcon x="w-[49px]" under="w-10">
        <circle cx="12" cy="12" r="11.500" fill="#ea4335" /><path d="M2 6.300a11.500 11.500 0 0 0 10 17.200l5-8.500-8.500 1z" fill="#34a853" /><path d="M12 6.500h10a11.500 11.500 0 0 1-10 17l5-9z" fill="#fbbc05" /><circle cx="12" cy="12" r="5.800" fill="#fff" /><circle cx="12" cy="12" r="4.500" fill="#4285f4" />
        <circle cx="18" cy="18" r="6.500" fill="#b8b2ad" /><circle cx="18.500" cy="15.500" r="2" fill="#5b4a44" /><path d="M13.500 22.500c2-6.500 7-6.500 9.500 0-2 2.500-7 2.500-9.500 0z" fill="#111" />
      </TaskIcon>
      <div className="ml-px h-10 w-[45px] bg-[#4b5c66]">
        <TaskIcon x="w-[45px]" under="w-[45px]"><path d="M13 0h9v24h-9z" fill="#d99a08" /><path d="M8 6h9v18H8z" fill="#f0b928" /><path d="M3 12h8.500v12H3z" fill="#fbdc61" /></TaskIcon>
      </div>
      <div className="h-10 w-[3px] border-l border-[#24363f] bg-[#3c4d58]" />
      <TaskIcon x="ml-[2px] w-[45px]" under="w-10"><defs><linearGradient id={g("p")} x1="0" y1="0" x2="1" y2="1"><stop stopColor="#21d789" /><stop offset=".5" stopColor="#a5e43c" /><stop offset="1" stopColor="#f1ee2c" /></linearGradient></defs><path d="M1 1h22v22H1z" fill={`url(#${g("p")})`} /><path d="M4 4h16v16H4z" fill="#0b0b0b" /><text x="5.500" y="12" fontSize="8" fontWeight="700" fill="#fff">PC</text><path d="M6 16.500h6" stroke="#fff" strokeWidth="1.500" /></TaskIcon>
      <TaskIcon x="ml-[4px] w-[45px]" under="w-10"><path d="m12 0 6 6-6 6-6-6z" fill="#ee7a6e" /><path d="m6 6 6 6-6 6-6-6z" fill="#86aef0" /><path d="m18 6 6 6-6 6-6-6z" fill="#82c768" /><path d="m12 12 6 6-6 6-6-6z" fill="#f4d566" /><path d="M9 4.500 12 8v10M12 9l4.500 3.500" fill="none" stroke="#222" strokeWidth="1.800" /><circle cx="12" cy="8" r="2" /><circle cx="12" cy="17.500" r="2" /><circle cx="17" cy="12.500" r="2" /></TaskIcon>
      <div className="ml-auto size-5 rounded-full bg-linear-to-br from-[#ffc21c] to-[#f07c0c]" />
      <Fit w={27} className="ml-[10px] text-[14px]">86°F</Fit>
      <Fit w={38} className="ml-[9px] text-[14px]">Sunny</Fit>
      <svg viewBox="0 0 12 8" className="ml-[25px] h-2 w-3" fill="none" stroke="#fff" strokeWidth="1.200"><path d="M.5 7 6 1.500 11.500 7" /></svg>
      <svg viewBox="0 0 14 18" className="ml-[12px] h-[18px] w-[14px]" fill="none" stroke="#fff" strokeWidth="1.200"><rect x="1" y="5" width="8" height="8" rx="1.500" /><path d="m9 8 3-2v6l-3-2M2.500 2.500c2-2 4-2 6 0M2.500 15.500c2 2 4 2 6 0" /></svg>
      <svg viewBox="0 0 16 16" className="ml-[8px] size-4"><path d="M0 0h16v16H0z" fill="#ddd" /><path d="M1 2h14v2H1zM1 6h14v2H1zM1 10h14v2H1zM1 13.500h14V15H1z" fill="#c8243c" /><path d="M1 1h8v8H1z" fill="#2222b8" /><path d="M2 3h6M2 5.500h6M2 8h6" stroke="#fff" strokeDasharray="1 1.500" /></svg>
      <svg viewBox="0 0 17 14" className="ml-[7px] h-[14px] w-[17px]" fill="none" stroke="#fff" strokeWidth="1.100"><path d="M5.500 1.500h11v8.500H4V6M8 10v3M5 13h8M.7.700h4v3h-4zM2.700 3.700V6H4" /></svg>
      <svg viewBox="0 0 17 14" className="ml-[7px] h-[14px] w-[17px]" fill="none" stroke="#fff" strokeWidth="1.100"><path d="M.7 4.500h2.500L6.500 1v12L3.200 9.500H.7zM9 5c1 1.200 1 2.800 0 4M11.200 3c2 2.400 2 5.600 0 8M13.500 1c3 3.600 3 8.400 0 12" /></svg>
      <div className="ml-[9px] flex w-[53px] flex-col items-center text-[12px] leading-[18px]">
        <Fit w={43}>3:40 PM</Fit><Fit w={53}>8/17/2024</Fit>
      </div>
      <div className="relative ml-[17px] size-6">
        <svg viewBox="0 0 24 24" className="size-6"><path d="M0 3h16v13H8l-4 4v-4H0z" fill="#fff" /><path d="M3 6.500h10M3 9.500h10M3 12.500h6" stroke="#1c2a3e" /></svg>
        <span className="absolute left-[7px] top-[10px] flex size-4 items-center justify-center rounded-full border border-[#8b8f97] bg-[#3a3f4a] text-[11px] font-semibold leading-none">2</span>
      </div>
      <div className="relative ml-[14px] mr-[4px] h-6 w-[21px]">
        <svg viewBox="0 0 21 24" className="h-6 w-[21px]"><defs><linearGradient id={g("c1")} x1="0" y1="0" x2="0" y2="1"><stop stopColor="#2a7bea" /><stop offset="1" stopColor="#48d597" /></linearGradient><linearGradient id={g("c2")} x1="0" y1="0" x2="0" y2="1"><stop stopColor="#8f6cf0" /><stop offset="1" stopColor="#f07a8c" /></linearGradient></defs><path d="M5 2h7c2 0 2.500 1.500 3 4h-4L8.500 15H3c-3 0-3-2-2-5z" fill={`url(#${g("c1")})`} /><path d="M13 6.500h4c3 0 4 2 3 5l-1.500 5H10z" fill={`url(#${g("c2")})`} /></svg>
        <span className="absolute bottom-0 left-[5px] h-[7px] bg-[#fcd116] px-px text-[6.500px] font-bold leading-[7px] text-black">PRE</span>
      </div>
      <div className="ml-[13px] mr-1 h-10 w-px bg-[#6b7484]" />
    </div>
  );
}

export default function App() {
  return (
    <div className="h-[1024px] w-[1280px] overflow-hidden bg-white font-['Open_Sans',sans-serif]">
      <TitleBar />
      <Menu />
      <Toolbar />
      <Workspace />
      <StatusBar />
      <Taskbar />
    </div>
  );
}
